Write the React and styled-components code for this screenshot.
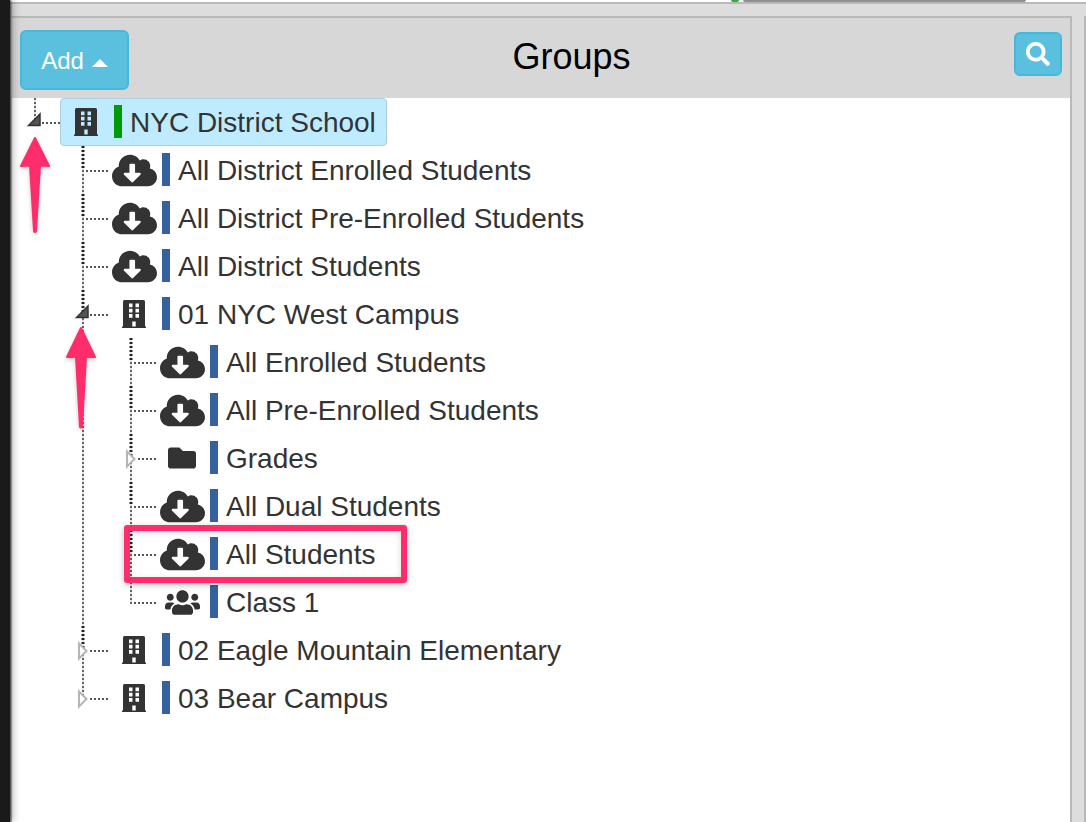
import React from "react";
import styled, { createGlobalStyle, css } from "styled-components";
import { FaCloudDownloadAlt, FaFolder, FaSearch, FaUsers } from "react-icons/fa";

const GlobalStyle = createGlobalStyle`
  * { box-sizing: border-box; }
  body {
    margin: 0;
    background: #dddddd;
    font-family: "Liberation Sans", Arial, sans-serif;
    color: #333333;
  }
`;

const Page = styled.div`
  display: flex;
  min-height: 100vh;
  overflow: hidden;
`;

const Rail = styled.div`
  position: relative;
  z-index: 1;
  flex: 0 0 10px;
  background: #1a1a1a;
  box-shadow: 1px 0 2px rgba(0, 0, 0, 0.7), 2px 0 8px rgba(0, 0, 0, 0.35);
`;

const Main = styled.div`
  flex: 1;
  min-width: 0;
  display: flex;
  flex-direction: column;
`;

const TopStrip = styled.div`
  display: flex;
  justify-content: flex-end;
  gap: 4px;
  height: 4px;
  padding-right: 60px;
  border-bottom: 2px solid #b9b9b9;
  background: #ffffff;
`;

const StatusDot = styled.span`
  width: 8px;
  height: 2px;
  border-radius: 0 0 4px 4px;
  background: #3aa83a;
`;

const StripTab = styled.span`
  width: 283px;
  height: 2px;
  border-radius: 0 0 2px 2px;
  background: #909090;
`;

const Columns = styled.div`
  flex: 1;
  display: flex;
  gap: 12px;
  padding: 12px 0 0 2px;
`;

const Panel = styled.section`
  flex: 1;
  min-width: 0;
  border: solid #b9b9b9;
  border-width: 2px 2px 0 0;
  background: #ffffff;
`;

const NextPanel = styled.div`
  flex: 0 0 2px;
  background: #b9b9b9;
`;

const Header = styled.header`
  display: flex;
  justify-content: space-between;
  align-items: flex-start;
  height: 80px;
  padding: 12px 8px;
  background: #d7d7d7;
`;

const Title = styled.h1`
  margin: 0;
  color: #000000;
  font-size: 36px;
  font-weight: 400;
  line-height: 54px;
`;

const Button = styled.button`
  display: flex;
  align-items: center;
  justify-content: center;
  gap: 8px;
  padding: 0;
  border: 2px solid #46b8da;
  border-radius: 6px;
  background: #5bc0de;
  color: #ffffff;
  font: inherit;
  font-size: 24px;
`;

const AddButton = styled(Button)`
  width: 109px;
  height: 60px;
  padding-top: 2px;
`;

const SearchButton = styled(Button)`
  width: 48px;
  height: 44px;
  margin-top: 2px;
`;

const Caret = styled.span`
  margin-top: 4px;
  border: solid transparent;
  border-width: 0 8px 8px;
  border-bottom-color: #ffffff;
`;

const List = styled.ul`
  margin: 0;
  padding: 0 0 0 ${(p) => (p.$nested ? "48px" : "0")};
  list-style: none;
`;

const Item = styled.li`
  background: repeating-linear-gradient(#666666 0 2px, #e6e6e6 2px 4px) 22px 0 / 2px
    ${(p) => (p.$last ? "26px" : "100%")} no-repeat;
`;

const Row = styled.div`
  display: flex;
  height: 48px;
`;

const Gutter = styled.svg`
  flex: 0 0 48px;
  width: 48px;
  height: 48px;
`;

const Node = styled.a`
  display: flex;
  align-items: center;
  padding: 0 10px 0 1px;
  border: 1px solid transparent;
  border-radius: 4px;
  color: inherit;
  font-size: 28px;
  line-height: 46px;
  text-decoration: none;
  white-space: nowrap;
  ${(p) =>
    p.$selected &&
    css`
      border-color: #a9cfe0;
      background: #beebff;
    `}
`;

const Label = styled.span`
  padding-top: 2px;
`;

const IconBox = styled.span`
  display: flex;
  justify-content: center;
  width: 48px;
`;

const Bar = styled.span`
  width: 8px;
  height: 33px;
  margin: 0 8px 2px 4px;
  background: ${(p) => p.$color};
`;

const Tree = styled.nav`
  position: relative;
`;

const Highlight = styled.div`
  position: absolute;
  left: 112px;
  top: 427px;
  width: 283px;
  height: 58px;
  border: 6px solid #ff2d6b;
  border-radius: 3px;
  box-shadow: 0 2px 6px rgba(0, 0, 0, 0.25), inset 0 2px 6px rgba(0, 0, 0, 0.15);
`;

const Arrow = styled.svg`
  position: absolute;
  left: ${(p) => p.$left}px;
  top: ${(p) => p.$top}px;
  overflow: visible;
  filter: drop-shadow(0 2px 2px rgba(0, 0, 0, 0.2));
`;

function BuildingIcon() {
  return (
    <svg width="24" height="28" viewBox="0 0 24 28" fill="currentColor" aria-hidden="true">
      <path
        fillRule="evenodd"
        d="M2.5 0H21.5Q23 0 23 1.5V26.6H24V28H0V26.6H1V1.5Q1 0 2.5 0ZM7 3.5V7.2H10.5V3.5ZM13.5 3.5V7.2H17V3.5ZM7 8.8V12.5H10.5V8.8ZM13.5 8.8V12.5H17V8.8ZM7 14V17.7H10.5V14ZM13.5 14V17.7H17V14ZM10.3 21.5V26.6H13.7V21.5Z"
      />
    </svg>
  );
}

const icons = {
  building: <BuildingIcon />,
  cloud: <FaCloudDownloadAlt size={45} />,
  folder: <FaFolder size={28} />,
  users: <FaUsers size={35} />,
};

const groups = {
  label: "NYC District School",
  icon: "building",
  color: "#009a0c",
  open: true,
  selected: true,
  children: [
    { label: "All District Enrolled Students", icon: "cloud" },
    { label: "All District Pre-Enrolled Students", icon: "cloud" },
    { label: "All District Students", icon: "cloud" },
    {
      label: "01 NYC West Campus",
      icon: "building",
      open: true,
      children: [
        { label: "All Enrolled Students", icon: "cloud" },
        { label: "All Pre-Enrolled Students", icon: "cloud" },
        { label: "Grades", icon: "folder", open: false },
        { label: "All Dual Students", icon: "cloud" },
        { label: "All Students", icon: "cloud" },
        { label: "Class 1", icon: "users" },
      ],
    },
    { label: "02 Eagle Mountain Elementary", icon: "building", open: false },
    { label: "03 Bear Campus", icon: "building", open: false },
  ],
};

function Connector({ open, last }) {
  return (
    <Gutter viewBox="0 0 48 48" aria-hidden="true">
      {!last && (
        <path d="M23 0V22" stroke="#222" strokeWidth="3" strokeDasharray="2 2" />
      )}
      <path
        d={open === undefined ? "M26 25H48" : "M30 25H48"}
        stroke="#555"
        strokeWidth="2"
        strokeDasharray="2 2"
      />
      {open === true && (
        <path d="M16.5 27.5 28 16V27.5Z" fill="#555" stroke="#333" strokeWidth="1.5" />
      )}
      {open === false && (
        <path d="M19 17.5V32.5L26.5 25Z" fill="#fff" stroke="#b5b5b5" strokeWidth="2" />
      )}
    </Gutter>
  );
}

function TreeNode({ node, last }) {
  return (
    <Item $last={last}>
      <Row>
        <Connector open={node.open} last={last} />
        <Node href="#" $selected={node.selected}>
          <IconBox>{icons[node.icon]}</IconBox>
          <Bar $color={node.color || "#35629d"} />
          <Label>{node.label}</Label>
        </Node>
      </Row>
      {node.children && (
        <List $nested>
          {node.children.map((child, i) => (
            <TreeNode
              key={child.label}
              node={child}
              last={i === node.children.length - 1}
            />
          ))}
        </List>
      )}
    </Item>
  );
}

export default function App() {
  return (
    <Page>
      <GlobalStyle />
      <Rail />
      <Main>
        <TopStrip>
          <StatusDot />
          <StripTab />
        </TopStrip>
        <Columns>
          <Panel>
            <Header>
              <AddButton type="button">
                Add <Caret />
              </AddButton>
              <Title>Groups</Title>
              <SearchButton type="button" aria-label="Search">
                <FaSearch size={24} />
              </SearchButton>
            </Header>
            <Tree aria-label="Groups">
              <List>
                <TreeNode node={groups} last />
              </List>
              <Highlight />
              <Arrow $left={8} $top={38} width="30" height="98" viewBox="0 0 30 98">
                <path
                  d="M15 2 29 30 20 29.500 16 95Q15 97 14 95L10 29.500 1 30Z"
                  fill="#ff2d6b"
                  stroke="#ff2d6b"
                  strokeWidth="2"
                  strokeLinejoin="round"
                />
              </Arrow>
              <Arrow $left={53} $top={228} width="32" height="104" viewBox="0 0 32 104">
                <path
                  d="M16 2 30 31 21 31 17 101Q16 102 15 101L11 31 2 31Z"
                  fill="#ff2d6b"
                  stroke="#ff2d6b"
                  strokeWidth="2"
                  strokeLinejoin="round"
                />
              </Arrow>
            </Tree>
          </Panel>
          <NextPanel />
        </Columns>
      </Main>
    </Page>
  );
}
